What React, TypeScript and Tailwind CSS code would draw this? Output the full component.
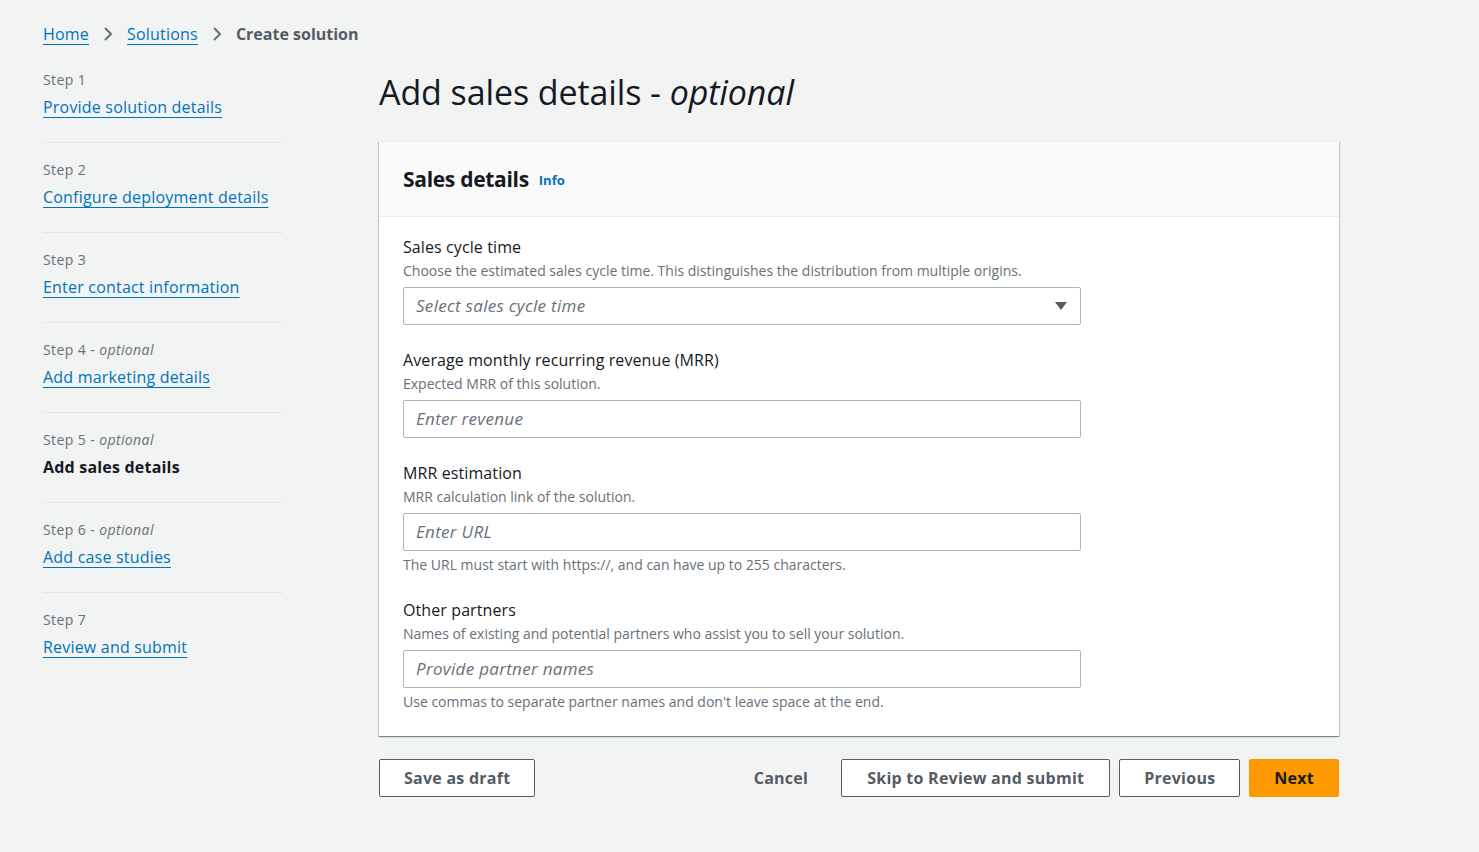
import React from "react";

const steps = [
  { label: "Step 1", optional: false, title: "Provide solution details", current: false },
  { label: "Step 2", optional: false, title: "Configure deployment details", current: false },
  { label: "Step 3", optional: false, title: "Enter contact information", current: false },
  { label: "Step 4", optional: true, title: "Add marketing details", current: false },
  { label: "Step 5", optional: true, title: "Add sales details", current: true },
  { label: "Step 6", optional: true, title: "Add case studies", current: false },
  { label: "Step 7", optional: false, title: "Review and submit", current: false },
];

function Chevron() {
  return (
    <svg width="12" height="16" viewBox="0 0 12 16" className="mx-[13px]">
      <path d="M3 2 L9 8 L3 14" fill="none" stroke="#687078" strokeWidth="2" />
    </svg>
  );
}

function Field({
  label,
  desc,
  placeholder,
  constraint,
  select,
}: {
  label: string;
  desc: string;
  placeholder: string;
  constraint?: string;
  select?: boolean;
}) {
  return (
    <div className="flex flex-col">
      <div className="text-[16px] leading-[22px] tracking-[0.1px] text-[#16191f]">{label}</div>
      <div className="mt-[3px] text-[14px] leading-[20px] text-[#687078]">{desc}</div>
      <div className="mt-[6px] flex h-[38px] w-[678px] items-center justify-between rounded-[2px] border border-[#aab7b8] bg-white pl-[12px] pr-[12px]">
        <span className="text-[17px] italic tracking-[0.3px] text-[#687078]">{placeholder}</span>
        {select && (
          <svg width="14" height="10" viewBox="0 0 14 10">
            <path d="M1 1 L13 1 L7 9 Z" fill="#545b64" />
          </svg>
        )}
      </div>
      {constraint && (
        <div className="mt-[4px] text-[14px] leading-[20px] text-[#687078]">{constraint}</div>
      )}
    </div>
  );
}

export default function App() {
  return (
    <div className="min-h-screen bg-[#f2f3f3] pl-[43px] pt-[22px] [font-family:'Open_Sans',Roboto,sans-serif] text-[#16191f]">
      <nav className="flex h-[24px] items-center text-[16px] leading-[24px] tracking-[0.2px]">
        <a className="text-[#0073bb] underline decoration-1 underline-offset-[4px]">Home</a>
        <Chevron />
        <a className="text-[#0073bb] underline decoration-1 underline-offset-[4px]">Solutions</a>
        <Chevron />
        <span className="font-bold tracking-[0px] text-[#545b64]">Create solution</span>
      </nav>

      <div className="mt-[24px] flex">
        <ul className="w-[240px] shrink-0">
          {steps.map((s, i) => (
            <li
              key={s.label}
              className={
                (i > 0 ? "pt-[17px] " : "") +
                (i < steps.length - 1 ? "border-b border-[#e4e8e8] pb-[23px]" : "pb-[23px]")
              }
            >
              <div className="text-[14px] leading-[20px] tracking-[0.4px] text-[#687078]">
                {s.label}
                {s.optional && (
                  <>
                    {" - "}
                    <i>optional</i>
                  </>
                )}
              </div>
              <div className="mt-[5px] text-[16px] leading-[24px] tracking-[0.2px]">
                {s.current ? (
                  <span className="font-bold text-[#16191f]">{s.title}</span>
                ) : (
                  <a className="text-[#0073bb] underline decoration-1 underline-offset-[4px]">{s.title}</a>
                )}
              </div>
            </li>
          ))}
        </ul>

        <main className="ml-[96px] w-[960px] shrink-0">
          <h1 className="h-[44px] text-[34px] font-normal leading-[44px] tracking-[-0.1px] text-[#16191f]">
            Add sales details - <i>optional</i>
          </h1>

          <section className="mt-[27px] border-t border-[#eaeded] bg-white shadow-[0_1px_1px_0_rgba(0,28,36,0.3),1px_1px_1px_0_rgba(0,28,36,0.15),-1px_1px_1px_0_rgba(0,28,36,0.15)]">
            <header className="flex h-[75px] items-center border-b border-[#eaeded] bg-[#fafafa] px-[24px]">
              <h2 className="text-[21px] font-bold leading-[28px] tracking-[-0.3px] text-[#16191f]">Sales details</h2>
              <a className="ml-[10px] mt-[4px] text-[13px] font-bold text-[#0073bb]">Info</a>
            </header>
            <div className="flex flex-col gap-[24px] px-[24px] pb-[24px] pt-[19px]">
              <Field
                label="Sales cycle time"
                desc="Choose the estimated sales cycle time. This distinguishes the distribution from multiple origins."
                placeholder="Select sales cycle time"
                select
              />
              <Field
                label="Average monthly recurring revenue (MRR)"
                desc="Expected MRR of this solution."
                placeholder="Enter revenue"
              />
              <Field
                label="MRR estimation"
                desc="MRR calculation link of the solution."
                placeholder="Enter URL"
                constraint="The URL must start with https://, and can have up to 255 characters."
              />
              <Field
                label="Other partners"
                desc="Names of existing and potential partners who assist you to sell your solution."
                placeholder="Provide partner names"
                constraint="Use commas to separate partner names and don't leave space at the end."
              />
            </div>
          </section>

          <div className="mt-[23px] flex items-center tracking-[0.25px]">
            <button className="h-[38px] rounded-[2px] border border-[#545b64] bg-white px-[24px] text-[16px] font-bold text-[#545b64]">
              Save as draft
            </button>
            <div className="ml-auto flex items-center gap-[9px]">
              <button className="mr-[14px] h-[38px] px-[10px] text-[16px] font-bold text-[#545b64]">Cancel</button>
              <button className="h-[38px] rounded-[2px] border border-[#545b64] bg-white px-[25px] text-[16px] font-bold text-[#545b64]">
                Skip to Review and submit
              </button>
              <button className="h-[38px] rounded-[2px] border border-[#545b64] bg-white px-[24px] text-[16px] font-bold text-[#545b64]">
                Previous
              </button>
              <button className="h-[38px] rounded-[2px] border border-[#ff9900] bg-[#ff9900] px-[24px] text-[16px] font-bold text-[#16191f]">
                Next
              </button>
            </div>
          </div>
        </main>
      </div>
    </div>
  );
}
